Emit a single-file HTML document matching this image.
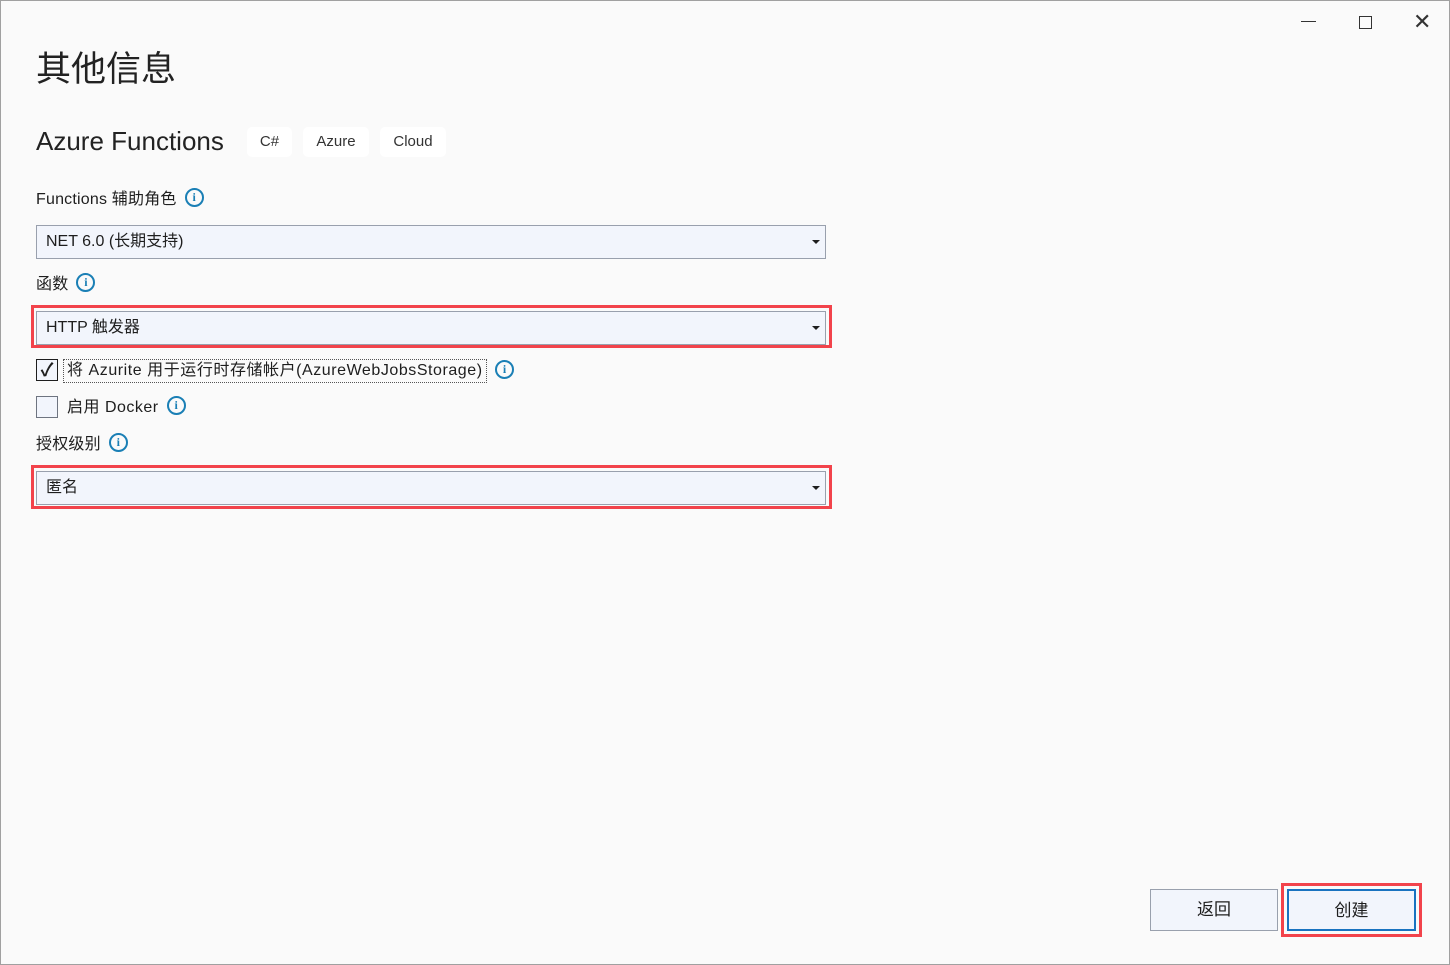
<!DOCTYPE html>
<html><head><meta charset="utf-8"><style>
*{box-sizing:border-box;margin:0;padding:0}
body{width:1450px;height:965px;background:#fafafa;font-family:"Liberation Sans","Noto Sans CJK SC",sans-serif;color:#1e1e1e;position:relative;overflow:hidden;border:1px solid #a0a0a0}
.a{position:absolute}
.sel{position:absolute;left:35px;width:790px;height:34px;background:#f2f5fc;border:1px solid #99a0ad;font-size:16px;padding:4px 9px;line-height:24px}
.sel:after{content:"";position:absolute;right:5px;top:14px;border-left:4px solid transparent;border-right:4px solid transparent;border-top:4px solid #1e1e1e}
.red{position:absolute;border:3px solid #f2434b}
.lbl{position:absolute;font-size:16px;line-height:22px;letter-spacing:0.2px}
.info{display:inline-block;width:19px;height:19px;border:2px solid #1a7fb5;border-radius:50%;color:#1a7fb5;font-size:12px;font-weight:bold;text-align:center;line-height:15px;vertical-align:middle;margin-left:8px;margin-top:-4px;font-family:"Liberation Serif",serif;letter-spacing:0}
.tag{position:absolute;top:126px;height:30px;background:#fff;border-radius:5px;font-size:15px;text-align:center;line-height:30px;color:#333}
.btn{position:absolute;top:888px;height:42px;background:#f2f5fc;border:1px solid #99a0ad;font-size:17px;text-align:center;line-height:40px}
.cb{position:absolute;left:35px;width:22px;height:22px;border:1px solid #6e7480;background:#f2f5fc}
</style></head><body>
<div class="a" style="left:1300px;top:20px;width:15px;height:1px;background:#333"></div>
<div class="a" style="left:1358px;top:15px;width:13px;height:13px;border:1.5px solid #333"></div>
<div class="a" style="left:1412px;top:8px;font-size:22px;color:#333">✕</div>
<div class="a" style="left:35px;top:40px;font-size:35px;color:#222">其他信息</div>
<div class="a" style="left:35px;top:125px;font-size:26px;color:#222">Azure Functions</div>
<div class="tag" style="left:246px;width:45px">C#</div>
<div class="tag" style="left:302px;width:66px">Azure</div>
<div class="tag" style="left:379px;width:66px">Cloud</div>
<div class="lbl" style="left:35px;top:188px">Functions 辅助角色<span class="info">i</span></div>
<div class="sel" style="top:224px">NET 6.0 (长期支持)</div>
<div class="lbl" style="left:35px;top:273px">函数<span class="info">i</span></div>
<div class="red" style="left:30px;top:304px;width:801px;height:43px"></div>
<div class="sel" style="top:310px">HTTP 触发器</div>
<div class="cb" style="top:358px;border-color:#1e1e1e;font-size:18px;line-height:20px;text-align:center;font-weight:bold">✓</div>
<div class="lbl" style="left:62px;top:358px;border:1px dotted #555;padding:0 3px;letter-spacing:0.55px">将 Azurite 用于运行时存储帐户(AzureWebJobsStorage)</div>
<div class="a" style="left:486px;top:362px"><span class="info">i</span></div>
<div class="cb" style="top:395px"></div>
<div class="lbl" style="left:66px;top:396px;letter-spacing:0.5px">启用 Docker<span class="info">i</span></div>
<div class="lbl" style="left:35px;top:433px">授权级别<span class="info">i</span></div>
<div class="red" style="left:30px;top:464px;width:801px;height:44px"></div>
<div class="sel" style="top:470px">匿名</div>
<div class="btn" style="left:1149px;width:128px">返回</div>
<div class="red" style="left:1280px;top:882px;width:141px;height:54px"></div>
<div class="btn" style="left:1286px;width:129px;border:2px solid #1a73c0">创建</div>
</body></html>
